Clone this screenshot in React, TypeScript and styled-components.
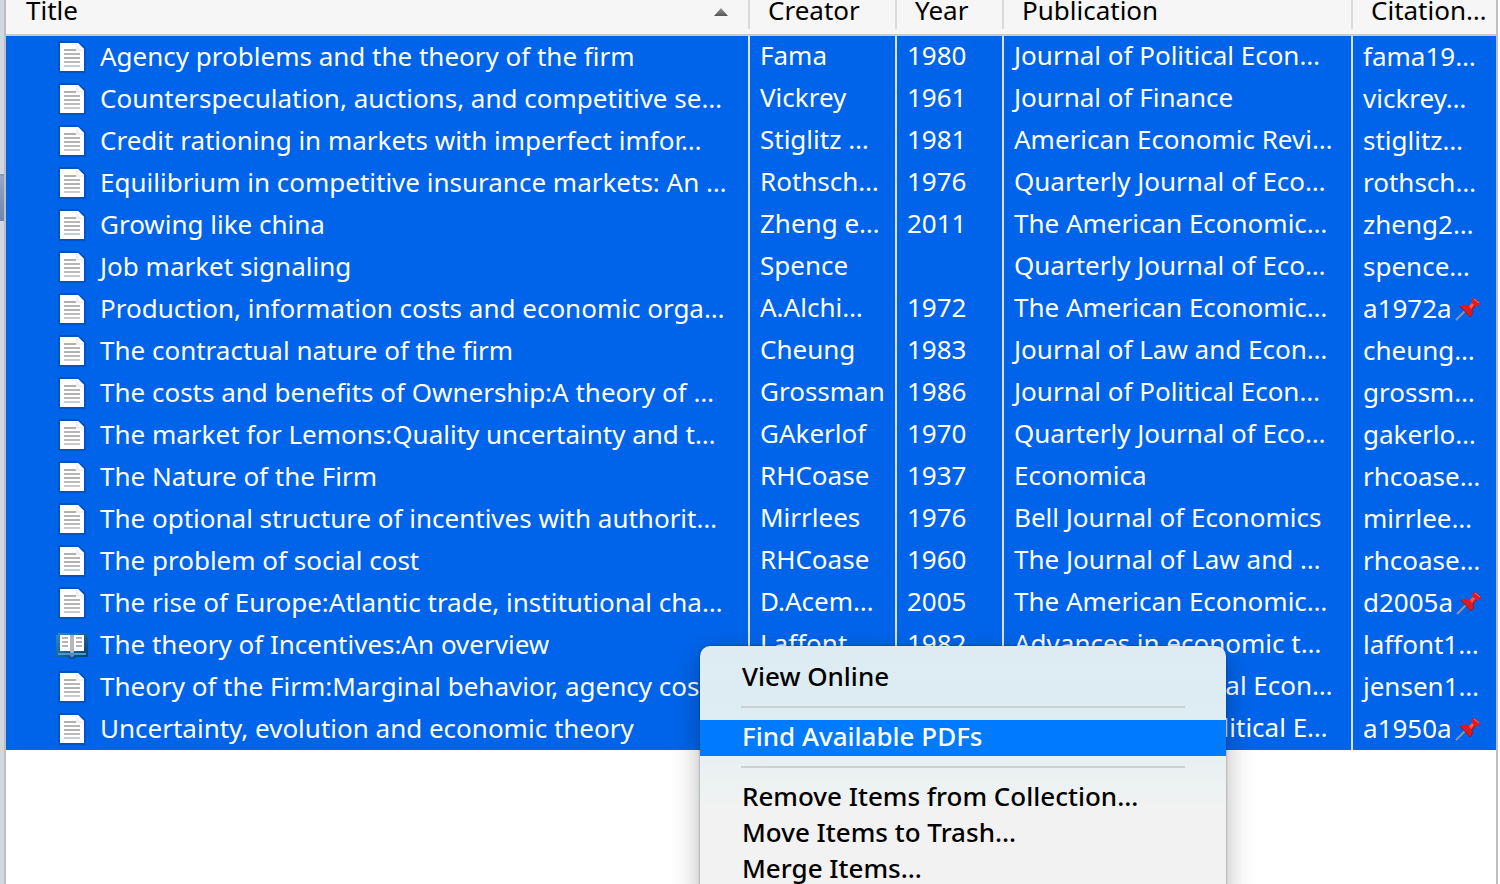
import React from "react";
import styled, { createGlobalStyle } from "styled-components";

const Global = createGlobalStyle`
  *, *::before, *::after { box-sizing: border-box; }
  body {
    margin: 0;
    background: #fff;
    font-family: "Lucida Grande", "Noto Sans", "Open Sans", sans-serif;
    font-size: 26px;
    line-height: 36px;
    color: #000;
  }
  button { font: inherit; color: inherit; border: 0; background: none; padding: 0; text-align: left; }
`;

const Window = styled.div`
  position: relative;
  display: flex;
  height: 100vh;
  overflow: hidden;
  padding-right: 2px;
`;

const Gutter = styled.aside`
  flex: none;
  width: 4px;
  padding-top: 174px;
  background: #d1d7e3;
`;

const GutterSelection = styled.div`
  height: 47px;
  border-top: 2px solid #8899c0;
  background: linear-gradient(#94a6cb, #6f85ad);
`;

const ItemsPane = styled.main`
  flex: 1;
  min-width: 0;
  border: solid #bebebe;
  border-width: 0 2px;
`;

const ItemTable = styled.table`
  width: 100%;
  table-layout: fixed;
  border-collapse: separate;
  border-spacing: 0;
`;

const Col = styled.col<{ $width?: number }>`
  width: ${(p) => (p.$width ? `${p.$width}px` : "auto")};
`;

const HeaderCell = styled.th`
  height: 36px;
  padding: 0;
  vertical-align: top;
  font-weight: 400;
  background: #f6f6f6;
  border-bottom: 2px solid #c8cbc8;
`;

const HeaderButton = styled.button<{ $divider?: boolean; $sorted?: boolean }>`
  display: flex;
  align-items: flex-start;
  justify-content: space-between;
  width: 100%;
  height: 29px;
  padding: 0 ${(p) => (p.$sorted ? 20 : 18)}px;
  line-height: 20px;
  white-space: nowrap;
  border-right: ${(p) => (p.$divider ? "2px solid #dadada" : "0")};
`;

const Row = styled.tr`
  height: 42px;
  color: #fff;
  background: #0064ea;
`;

const Cell = styled.td<{ $divider?: boolean }>`
  height: 42px;
  padding: 0 0 4px 10px;
  white-space: nowrap;
  border-right: ${(p) => (p.$divider ? "2px solid #dcdfe4" : "0")};
`;

const IconCell = styled(Cell)`
  padding-bottom: 0;
`;

const TitleContent = styled.div`
  display: flex;
  align-items: center;
  gap: 12px;
  padding-left: 40px;
`;

const KeyContent = styled.div`
  display: flex;
  align-items: center;
  gap: 3px;
`;

const CellText = styled.span`
  padding-bottom: 2px;
  line-height: 36px;
`;

const Menu = styled.div`
  position: absolute;
  top: 646px;
  left: 700px;
  width: 526px;
  padding: 14px 0;
  border-radius: 10px 10px 0 0;
  background: linear-gradient(#deebf3 0, #ddedf3 72px, #e9f1f2 120px, #f2f2f2 165px);
  box-shadow: 0 0 2px rgba(0, 0, 0, 0.5), 0 10px 28px rgba(0, 0, 0, 0.3);
`;

const MenuItem = styled.button<{ $active?: boolean }>`
  display: block;
  width: 100%;
  height: 36px;
  padding: 0 42px 4px;
  line-height: 32px;
  font-weight: 500;
  color: ${(p) => (p.$active ? "#fff" : "#000")};
  background: ${(p) => (p.$active ? "#007bff" : "transparent")};
`;

const Separator = styled.hr`
  height: 2px;
  margin: 10px 41px 12px;
  border: 0;
  background: #d0d0d2;
`;

const Icon = styled.svg`
  flex: none;
  display: block;
`;

const SortIcon = styled(Icon)`
  margin-top: 8px;
`;

const PageIcon = () => (
  <Icon width="32" height="32" viewBox="0 0 32 32" aria-label="Article">
    <path d="M3 0h19l8 7v25H3l-1-1V1z" fill="#0053c4" />
    <path d="M4 2h18l6 6v22H4z" fill="#fff" />
    <path d="M20 3h2l6 5v2h-8z" fill="#f1f1f1" />
    <path d="M22 2l6 6h-5z" fill="#fff" />
    <path d="M22 2l6 6" stroke="#b9cbe2" strokeWidth="1" />
    <path d="M8 9h12" stroke="#b0b0b0" strokeWidth="2" />
    <path d="M8 13h16" stroke="#b6b6b6" strokeWidth="2" />
    <path d="M8 17h16" stroke="#b2b2b2" strokeWidth="2" />
    <path d="M8 21h16" stroke="#bababa" strokeWidth="2" />
    <path d="M8 25h16" stroke="#cacaca" strokeWidth="2" />
  </Icon>
);

const BookIcon = () => (
  <Icon width="32" height="32" viewBox="0 0 32 32" aria-label="Book">
    <defs>
      <linearGradient id="cover" x1="0" y1="0" x2="1" y2="1">
        <stop offset="0" stopColor="#3389c4" />
        <stop offset="1" stopColor="#003c6e" />
      </linearGradient>
    </defs>
    <path d="M2 4h28v2h2v22H20l-2 2h-4l-2-2H0V6h2z" fill="url(#cover)" />
    <path d="M2 25h12l2 2 2-2h12" fill="none" stroke="#4f97c4" strokeWidth="2" />
    <path d="M4 6h10l2 1 2-1h10v16H18l-2 2-2-2H4z" fill="#fff" />
    <path d="M14 6h1l1 1 1-1h1v17l-2 2-2-2z" fill="#b4b6b9" />
    <path d="M6 9h6M6 13h6M6 17h6M20 9h6M20 13h6M20 17h6" stroke="#b4b4b4" strokeWidth="2" />
  </Icon>
);

const PinIcon = () => (
  <Icon width="26" height="26" viewBox="0 0 26 26" aria-label="Pinned">
    <path d="M1 24L11 14" stroke="#8d97a5" strokeWidth="2" />
    <path d="M5 10c3-2 6-2 9 0l3-3c-1-3 0-5 2-5l6 5c0 2-2 4-5 3l-3 4c1 3 0 5-2 7z" fill="#e01b20" />
    <path d="M5 10l10 11c2-2 3-4 2-7l3-4" fill="none" stroke="#a90f18" strokeWidth="1" />
    <path d="M14 10l3-3 2 2-3 4z" fill="#ff5a52" />
    <path d="M19 3l5 4" stroke="#ff7069" strokeWidth="1" />
  </Icon>
);

const SortArrow = () => (
  <SortIcon width="14" height="8" viewBox="0 0 14 8" aria-label="Sorted ascending">
    <defs>
      <linearGradient id="sort" x1="0" y1="0" x2="0" y2="1">
        <stop offset="0" stopColor="#999" />
        <stop offset="1" stopColor="#555" />
      </linearGradient>
    </defs>
    <path d="M7 0l7 8H0z" fill="url(#sort)" />
  </SortIcon>
);

interface Item {
  title: string;
  creator: string;
  year: string;
  publication: string;
  citation: string;
  book?: boolean;
  pinned?: boolean;
}

const items: Item[] = [
  { title: "Agency problems and the theory of the firm", creator: "Fama", year: "1980", publication: "Journal of Political Econ…", citation: "fama19…" },
  { title: "Counterspeculation, auctions, and competitive se…", creator: "Vickrey", year: "1961", publication: "Journal of Finance", citation: "vickrey…" },
  { title: "Credit rationing in markets with imperfect imfor…", creator: "Stiglitz …", year: "1981", publication: "American Economic Revi…", citation: "stiglitz…" },
  { title: "Equilibrium in competitive insurance markets: An …", creator: "Rothsch…", year: "1976", publication: "Quarterly Journal of Eco…", citation: "rothsch…" },
  { title: "Growing like china", creator: "Zheng e…", year: "2011", publication: "The American Economic…", citation: "zheng2…" },
  { title: "Job market signaling", creator: "Spence", year: "", publication: "Quarterly Journal of Eco…", citation: "spence…" },
  { title: "Production, information costs and economic orga…", creator: "A.Alchi…", year: "1972", publication: "The American Economic…", citation: "a1972a", pinned: true },
  { title: "The contractual nature of the firm", creator: "Cheung", year: "1983", publication: "Journal of Law and Econ…", citation: "cheung…" },
  { title: "The costs and benefits of Ownership:A theory of …", creator: "Grossman", year: "1986", publication: "Journal of Political Econ…", citation: "grossm…" },
  { title: "The market for Lemons:Quality uncertainty and t…", creator: "GAkerlof", year: "1970", publication: "Quarterly Journal of Eco…", citation: "gakerlo…" },
  { title: "The Nature of the Firm", creator: "RHCoase", year: "1937", publication: "Economica", citation: "rhcoase…" },
  { title: "The optional structure of incentives with authorit…", creator: "Mirrlees", year: "1976", publication: "Bell Journal of Economics", citation: "mirrlee…" },
  { title: "The problem of social cost", creator: "RHCoase", year: "1960", publication: "The Journal of Law and …", citation: "rhcoase…" },
  { title: "The rise of Europe:Atlantic trade, institutional cha…", creator: "D.Acem…", year: "2005", publication: "The American Economic…", citation: "d2005a", pinned: true },
  { title: "The theory of Incentives:An overview", creator: "Laffont", year: "1982", publication: "Advances in economic t…", citation: "laffont1…", book: true },
  { title: "Theory of the Firm:Marginal behavior, agency cos…", creator: "", year: "", publication: "Journal of Financial Econ…", citation: "jensen1…" },
  { title: "Uncertainty, evolution and economic theory", creator: "", year: "", publication: "The Journal of Political E…", citation: "a1950a", pinned: true },
];

export default function App() {
  return (
    <>
      <Global />
      <Window>
        <Gutter>
          <GutterSelection />
        </Gutter>
        <ItemsPane>
          <ItemTable>
            <colgroup>
              <Col />
              <Col $width={147} />
              <Col $width={107} />
              <Col $width={349} />
              <Col $width={143} />
            </colgroup>
            <thead>
              <tr>
                <HeaderCell scope="col" aria-sort="ascending">
                  <HeaderButton $divider $sorted>
                    Title
                    <SortArrow />
                  </HeaderButton>
                </HeaderCell>
                <HeaderCell scope="col"><HeaderButton $divider>Creator</HeaderButton></HeaderCell>
                <HeaderCell scope="col"><HeaderButton $divider>Year</HeaderButton></HeaderCell>
                <HeaderCell scope="col"><HeaderButton $divider>Publication</HeaderButton></HeaderCell>
                <HeaderCell scope="col"><HeaderButton>Citation…</HeaderButton></HeaderCell>
              </tr>
            </thead>
            <tbody>
              {items.map((item) => (
                <Row key={item.title} aria-selected>
                  <IconCell $divider>
                    <TitleContent>
                      {item.book ? <BookIcon /> : <PageIcon />}
                      <CellText>{item.title}</CellText>
                    </TitleContent>
                  </IconCell>
                  <Cell $divider>{item.creator}</Cell>
                  <Cell $divider>{item.year}</Cell>
                  <Cell $divider>{item.publication}</Cell>
                  <IconCell>
                    <KeyContent>
                      <CellText>{item.citation}</CellText>
                      {item.pinned && <PinIcon />}
                    </KeyContent>
                  </IconCell>
                </Row>
              ))}
            </tbody>
          </ItemTable>
        </ItemsPane>
        <Menu role="menu">
          <MenuItem role="menuitem">View Online</MenuItem>
          <Separator />
          <MenuItem role="menuitem" $active>Find Available PDFs</MenuItem>
          <Separator />
          <MenuItem role="menuitem">Remove Items from Collection…</MenuItem>
          <MenuItem role="menuitem">Move Items to Trash…</MenuItem>
          <MenuItem role="menuitem">Merge Items…</MenuItem>
        </Menu>
      </Window>
    </>
  );
}
